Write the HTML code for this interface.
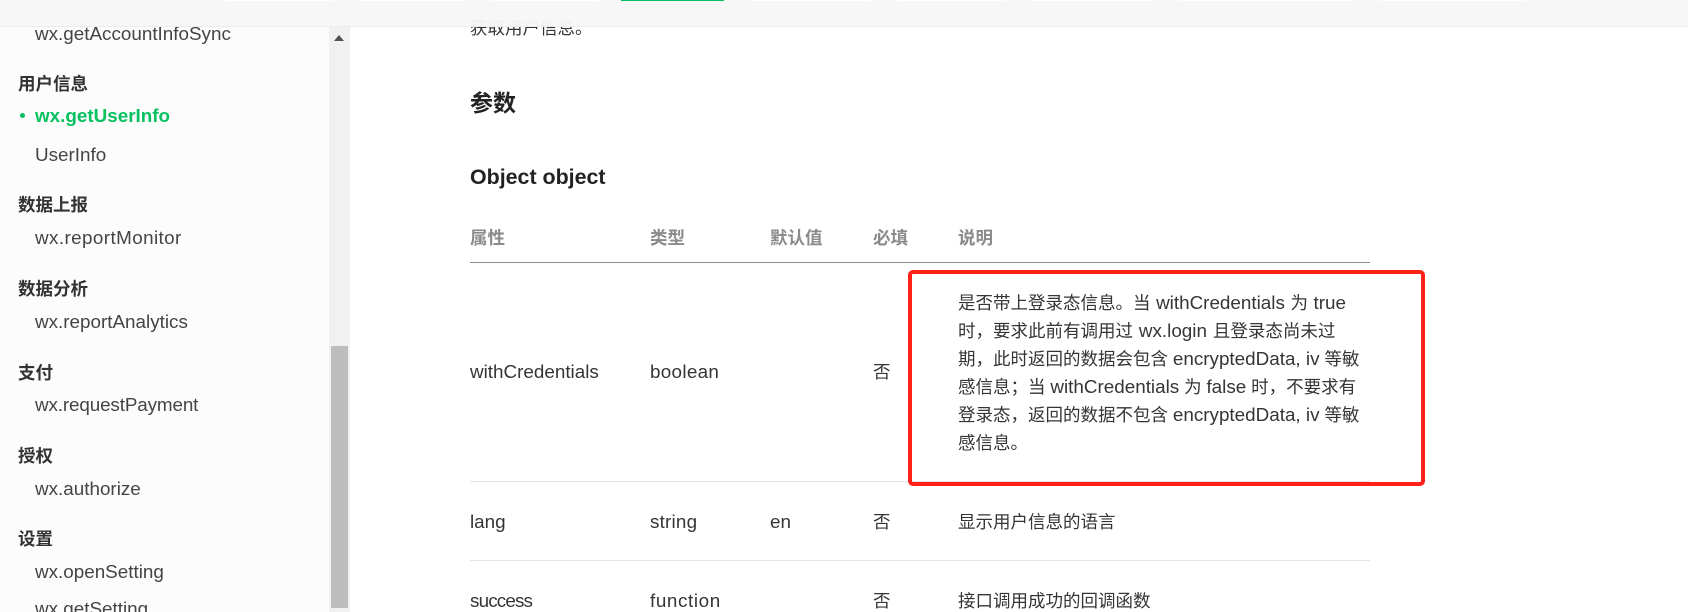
<!DOCTYPE html>
<html lang="zh-CN"><head><meta charset="utf-8"><title>wx.getUserInfo</title>
<style>
html,body{margin:0;padding:0;width:1688px;height:612px;overflow:hidden;background:#fff}
body{position:relative;font-family:"Liberation Sans","Noto Sans CJK SC",sans-serif;color:#353535;font-size:17.5px}
.t{position:absolute;white-space:nowrap;line-height:28px;height:28px}
.g{font-weight:700;color:#333;left:18px}
.i{left:35px;color:#444;font-size:18.85px}
.e{font-size:18.85px}
.h{font-weight:700;color:#8a8a8a;top:224px}
.l{position:absolute;left:470px;width:900px;height:1px}
</style></head><body>
<div style="position:absolute;left:0;top:0;width:329px;height:612px;background:#fcfcfc"></div>
<div style="position:absolute;left:329px;top:27px;width:21px;height:585px;background:#f1f1f1"></div>
<div style="position:absolute;left:331px;top:346px;width:17px;height:262px;background:#bdbdbd"></div>
<svg style="position:absolute;left:334px;top:35px" width="10" height="6"><path d="M5 0L10 6H0Z" fill="#505050"/></svg>

<div class="t i" style="top:20px">wx.getAccountInfoSync</div>
<div class="t g" style="top:70px">用户信息</div>
<div style="position:absolute;left:20px;top:113px;width:5px;height:5px;border-radius:50%;background:#07c160"></div>
<div class="t e" style="left:35px;top:102px;font-weight:700;color:#07c160">wx.getUserInfo</div>
<div class="t i" style="top:141px">UserInfo</div>
<div class="t g" style="top:191px">数据上报</div>
<div class="t i" style="top:224px;letter-spacing:.4px">wx.reportMonitor</div>
<div class="t g" style="top:275px">数据分析</div>
<div class="t i" style="top:308px">wx.reportAnalytics</div>
<div class="t g" style="top:359px">支付</div>
<div class="t i" style="top:391px;letter-spacing:-.13px">wx.requestPayment</div>
<div class="t g" style="top:442px">授权</div>
<div class="t i" style="top:475px">wx.authorize</div>
<div class="t g" style="top:525px">设置</div>
<div class="t i" style="top:558px">wx.openSetting</div>
<div class="t i" style="top:595px">wx.getSetting</div>

<div class="t" style="left:470px;top:14px">获取用户信息。</div>
<div class="t" style="left:470px;top:89px;font-size:23px;font-weight:700;color:#222">参数</div>
<div class="t" style="left:470px;top:163px;font-size:21.4px;font-weight:700;color:#222">Object object</div>

<div class="t h" style="left:470px">属性</div>
<div class="t h" style="left:650px">类型</div>
<div class="t h" style="left:770px">默认值</div>
<div class="t h" style="left:873px">必填</div>
<div class="t h" style="left:958px">说明</div>
<div class="l" style="top:262px;background:#8c8c8c"></div>
<div class="l" style="top:481px;background:#e5e5e5"></div>
<div class="l" style="top:560px;background:#e5e5e5"></div>

<div class="t e" style="left:470px;top:358px">withCredentials</div>
<div class="t e" style="left:650px;top:358px;letter-spacing:.3px">boolean</div>
<div class="t" style="left:873px;top:358px">否</div>
<div class="t" style="left:958px;top:289px;word-spacing:.7px">是否带上登录态信息。当 <span class="e">withCredentials</span> 为 <span class="e">true</span></div>
<div class="t" style="left:958px;top:317px;word-spacing:1px">时，要求此前有调用过 <span class="e">wx.login</span> 且登录态尚未过</div>
<div class="t" style="left:958px;top:345px">期，此时返回的数据会包含 <span class="e">encryptedData, iv</span> 等敏</div>
<div class="t" style="left:958px;top:373px">感信息；当 <span class="e">withCredentials</span> 为 <span class="e">false</span> 时，不要求有</div>
<div class="t" style="left:958px;top:401px">登录态，返回的数据不包含 <span class="e">encryptedData, iv</span> 等敏</div>
<div class="t" style="left:958px;top:429px">感信息。</div>

<div class="t e" style="left:470px;top:508px">lang</div>
<div class="t e" style="left:650px;top:508px;letter-spacing:.2px">string</div>
<div class="t e" style="left:770px;top:508px">en</div>
<div class="t" style="left:873px;top:508px">否</div>
<div class="t" style="left:958px;top:508px">显示用户信息的语言</div>

<div class="t e" style="left:470px;top:587px;letter-spacing:-.85px">success</div>
<div class="t e" style="left:650px;top:587px;letter-spacing:.6px">function</div>
<div class="t" style="left:873px;top:587px">否</div>
<div class="t" style="left:958px;top:587px">接口调用成功的回调函数</div>

<div style="position:absolute;left:908px;top:270px;width:508.5px;height:207.5px;border:4px solid #ff2018;border-radius:5px"></div>

<div style="position:absolute;left:0;top:0;width:1688px;height:26px;background:rgba(247,247,247,.97);border-bottom:1px solid #ececec"></div>
<div style="position:absolute;left:225px;top:0;width:108px;height:1px;background:#fff"></div>
<div style="position:absolute;left:358px;top:0;width:107px;height:1px;background:#fff"></div>
<div style="position:absolute;left:491px;top:0;width:107px;height:1px;background:#fff"></div>
<div style="position:absolute;left:621px;top:0;width:103px;height:1px;background:#07c160"></div>
<div style="position:absolute;left:750px;top:0;width:121px;height:1px;background:#fff"></div>
<div style="position:absolute;left:898px;top:0;width:107px;height:1px;background:#fff"></div>
<div style="position:absolute;left:1029px;top:0;width:123px;height:1px;background:#fff"></div>
<div style="position:absolute;left:1179px;top:0;width:176px;height:1px;background:#fff"></div>
<div style="position:absolute;left:1380px;top:0;width:145px;height:1px;background:#fff"></div>
</body></html>
